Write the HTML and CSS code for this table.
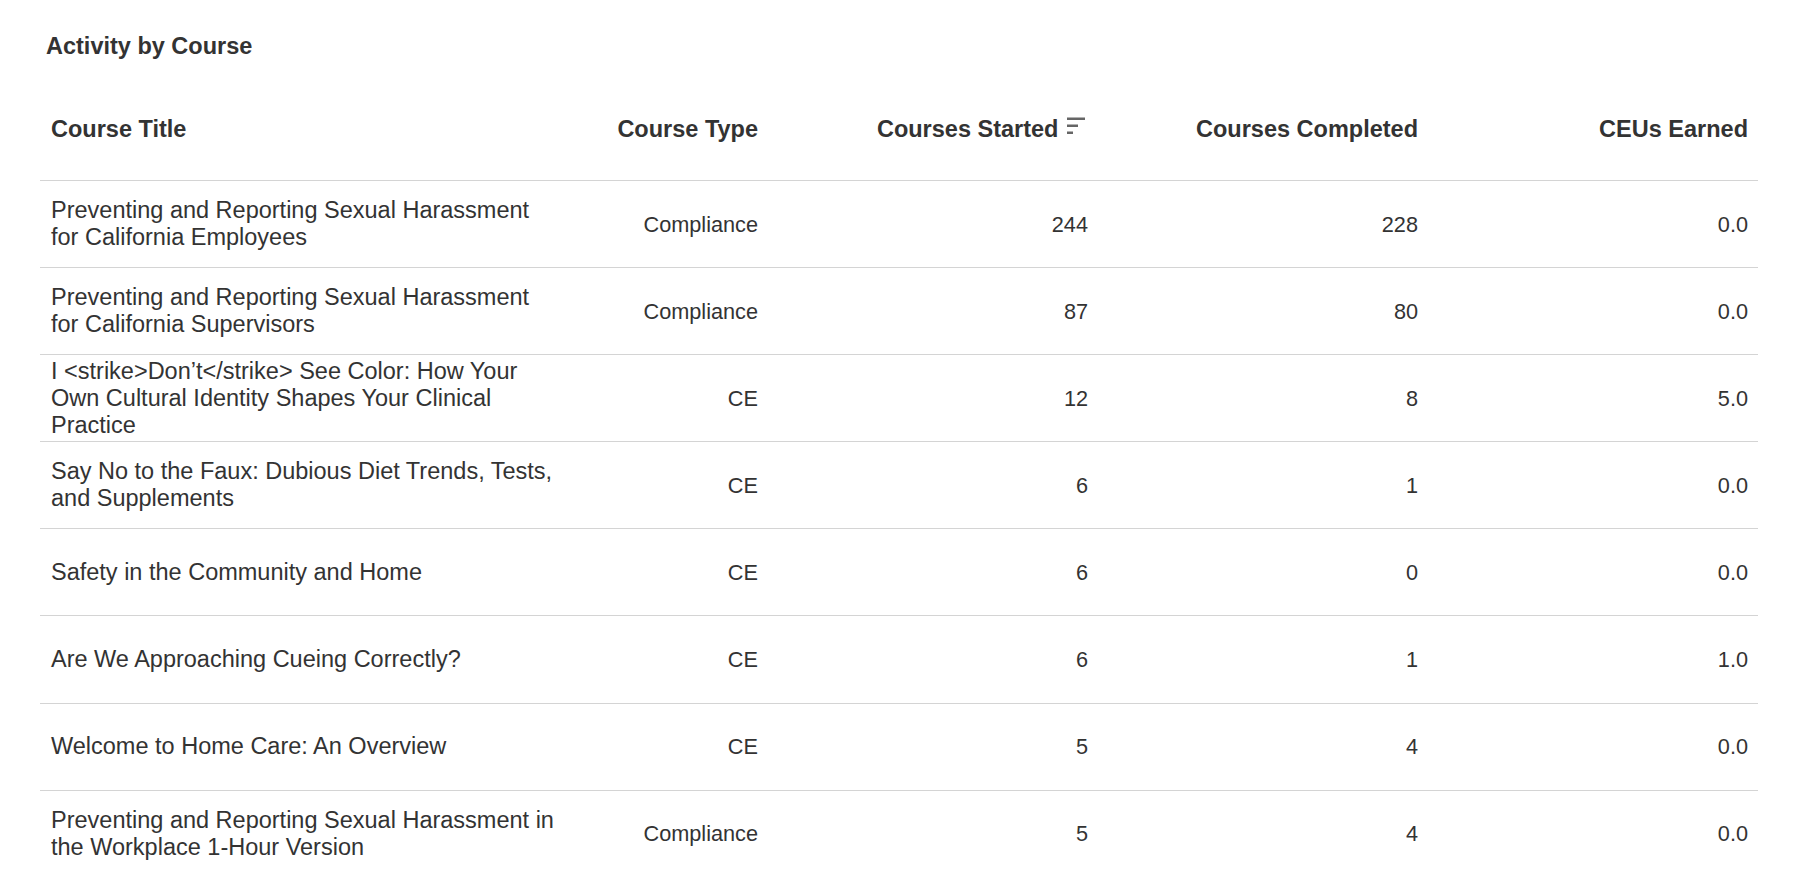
FILE: index.html
```html
<!DOCTYPE html>
<html lang="en">
<head>
    <meta charset="UTF-8">
    <meta name="viewport" content="width=device-width, initial-scale=1.0">
    <title>Activity by Course</title>
    <link rel="stylesheet" href="styles.css">
</head>
<body>
    <div class="report">
        <h2 class="report-title">Activity by Course</h2>

        <table class="course-table">
            <colgroup>
                <col class="col-title">
                <col class="col-type">
                <col class="col-num">
                <col class="col-num">
                <col class="col-num">
            </colgroup>
            <thead>
                <tr>
                    <th class="left">Course Title</th>
                    <th>Course Type</th>
                    <th class="sorted">
                        <span>Courses Started</span>
                        <!-- sort descending icon -->
                        <svg class="sort-icon" width="21" height="18" viewBox="0 0 21 18">
                            <rect x="0" y="0.5" width="18" height="2.5" />
                            <rect x="0" y="7.5" width="11" height="2.5" />
                            <rect x="0" y="14.5" width="6" height="2.5" />
                        </svg>
                    </th>
                    <th>Courses Completed</th>
                    <th>CEUs Earned</th>
                </tr>
            </thead>
            <tbody>
                <tr>
                    <td class="left">Preventing and Reporting Sexual Harassment for California Employees</td>
                    <td>Compliance</td>
                    <td>244</td>
                    <td>228</td>
                    <td>0.0</td>
                </tr>
                <tr>
                    <td class="left">Preventing and Reporting Sexual Harassment for California Supervisors</td>
                    <td>Compliance</td>
                    <td>87</td>
                    <td>80</td>
                    <td>0.0</td>
                </tr>
                <tr>
                    <td class="left">I &lt;strike&gt;Don&rsquo;t&lt;/strike&gt; See Color: How Your Own Cultural Identity Shapes Your Clinical Practice</td>
                    <td>CE</td>
                    <td>12</td>
                    <td>8</td>
                    <td>5.0</td>
                </tr>
                <tr>
                    <td class="left">Say No to the Faux: Dubious Diet Trends, Tests, and Supplements</td>
                    <td>CE</td>
                    <td>6</td>
                    <td>1</td>
                    <td>0.0</td>
                </tr>
                <tr>
                    <td class="left">Safety in the Community and Home</td>
                    <td>CE</td>
                    <td>6</td>
                    <td>0</td>
                    <td>0.0</td>
                </tr>
                <tr>
                    <td class="left">Are We Approaching Cueing Correctly?</td>
                    <td>CE</td>
                    <td>6</td>
                    <td>1</td>
                    <td>1.0</td>
                </tr>
                <tr>
                    <td class="left">Welcome to Home Care: An Overview</td>
                    <td>CE</td>
                    <td>5</td>
                    <td>4</td>
                    <td>0.0</td>
                </tr>
                <tr>
                    <td class="left">Preventing and Reporting Sexual Harassment in the Workplace 1-Hour Version</td>
                    <td>Compliance</td>
                    <td>5</td>
                    <td>4</td>
                    <td>0.0</td>
                </tr>
            </tbody>
        </table>
    </div>
</body>
</html>
```

FILE: styles.css
```css
body {
    font-family: "Liberation Sans", Arial, sans-serif;
    background: #fff;
    color: #333;
    margin: 0;
    padding: 0;
}

.report {
    padding: 33px 56px 0 40px;
}

.report-title {
    font-size: 23.5px;
    line-height: 27px;
    font-weight: bold;
    margin: 0 0 19px 6px;
}

.course-table {
    width: 100%;
    table-layout: fixed;
    border-collapse: collapse;
}

.col-title {
    width: 531px;
}

.col-type {
    width: 197px;
}

.course-table th {
    font-size: 23.5px;
    line-height: 27px;
    font-weight: bold;
    text-align: right;
    padding: 37px 10px 37px;
    white-space: nowrap;
}

.course-table td {
    font-size: 21.7px;
    line-height: 27px;
    text-align: right;
    vertical-align: middle;
    height: 87.1px;
    padding: 0 10px;
    border-top: 1px solid #d4d4d4;
    box-sizing: border-box;
}

.course-table .left {
    text-align: left;
    padding-left: 11px;
    padding-right: 11px;
}

.course-table td.left {
    font-size: 23.5px;
}

.sorted span {
    margin-right: 2px;
}

.sort-icon {
    fill: #666;
    vertical-align: 2px;
}
```
